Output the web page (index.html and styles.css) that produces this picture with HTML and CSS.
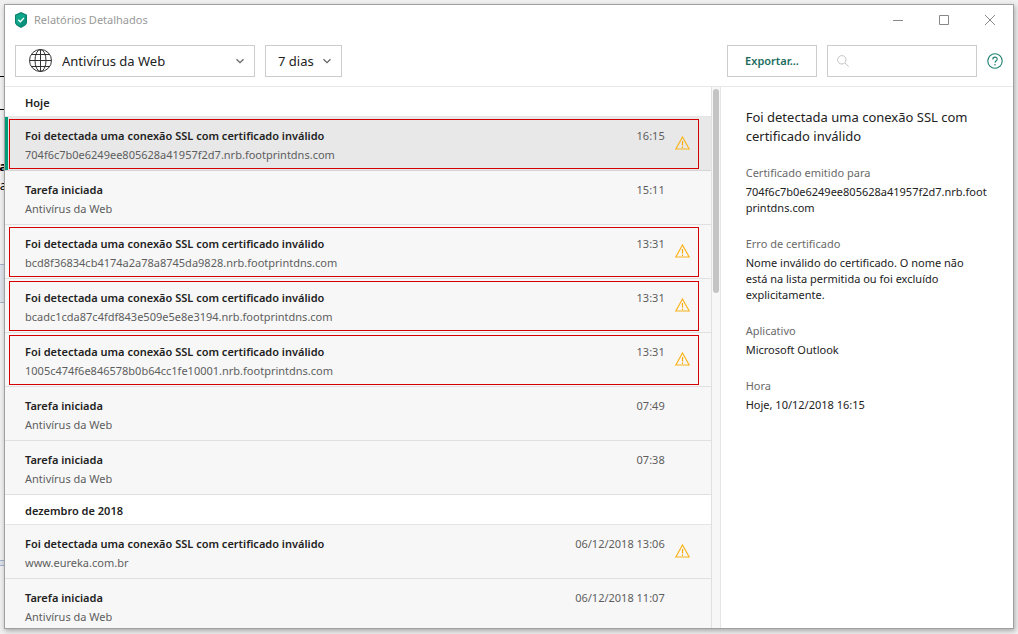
FILE: index.html
```html
<!DOCTYPE html>
<html lang="pt-BR">
<head>
<meta charset="utf-8">
<title>Relatórios Detalhados</title>
<link rel="stylesheet" href="styles.css">
</head>
<body>
<svg class="sprite" aria-hidden="true">
  <symbol id="warn" viewBox="0 0 15 14"><path d="M7.5 1 14.2 13H.8Z" fill="none" stroke="#fcb31c" stroke-width="1.2"/><path d="M7.5 5v4.6M7.5 10.6v1.3" fill="none" stroke="#fcab05" stroke-width="1.2"/></symbol>
  <symbol id="chev" viewBox="0 0 8 6"><path d="M.5 1.2 4 4.6 7.5 1.2" fill="none" stroke="#666" stroke-width="1.3"/></symbol>
</svg>
<div class="backdrop" aria-hidden="true">
  <div class="rule rule-a"></div>
  <div class="rule rule-b"></div>
  <span class="scrap scrap-bold">a</span>
  <span class="scrap scrap-plain">ra</span>
  <div class="cell cell-a"></div>
  <div class="cell cell-b"></div>
</div>
<div class="window">
  <header class="titlebar">
    <svg class="shield" viewBox="0 0 12 16"><path d="M6 0 12 2.7V10.5Q12 13 6 16Q0 13 0 10.5V2.7Z" fill="#0b7f6b"/><path d="M6 1.2 11 3.5V10.3Q11 12 6 14.7Q1 12 1 10.3V3.5Z" fill="#10a68a"/><path d="M11 3.5V10.3Q11 12 6 14.7L4 13.6Z" fill="#0a927a"/><path d="M3.2 7.8 5.3 9.8 9 6" fill="none" stroke="#fff" stroke-width="1.3"/></svg>
    <h1 class="title">Relatórios Detalhados</h1>
    <div class="winbtns">
      <button class="winbtn" aria-label="Minimizar"><svg viewBox="0 0 12 12"><path d="M1 6.5h10" stroke="#888"/></svg></button>
      <button class="winbtn" aria-label="Maximizar"><svg viewBox="0 0 12 12"><path d="M1.5 1.5h9v9h-9z" fill="none" stroke="#888"/></svg></button>
      <button class="winbtn" aria-label="Fechar"><svg viewBox="0 0 12 12"><path d="m1 1 10 10M11 1 1 11" stroke="#888"/></svg></button>
    </div>
  </header>
  <div class="toolbar">
    <div class="pick pick-component">
      <svg class="globe" viewBox="0 0 23 23"><g fill="none" stroke="#333"><circle cx="11.5" cy="11.5" r="11"/><ellipse cx="11.5" cy="11.5" rx="5.5" ry="11"/><path d="M11.5 .5v22M.5 11.5h22M2.2 5.5h18.6M2.2 17.5h18.6"/></g></svg>
      <select aria-label="Componente"><option>Antivírus da Web</option></select>
      <svg class="chev"><use href="#chev"/></svg>
    </div>
    <div class="pick pick-period">
      <select aria-label="Período"><option>7 dias</option></select>
      <svg class="chev"><use href="#chev"/></svg>
    </div>
    <button class="export">Exportar...</button>
    <label class="search">
      <svg viewBox="0 0 12 12"><g fill="none" stroke="#c4c4c4"><circle cx="4.8" cy="4.8" r="4.2"/><path d="m7.8 7.8 3.9 3.9"/></g></svg>
      <input type="search" aria-label="Pesquisar">
    </label>
    <button class="help" aria-label="Ajuda"><svg viewBox="0 0 16 16"><g fill="none" stroke="#1b7f70" stroke-width="1.1"><circle cx="8" cy="8" r="7.2"/><path d="M5.8 6.4C5.8 3.4 10.2 3.4 10.2 6.2 10.2 7.8 8 7.8 8 9.8M8 11v1.4"/></g></svg></button>
  </div>
  <main class="content">
    <section class="list">
      <h2 class="group">Hoje</h2>
      <ul class="rows">
        <li class="row selected"><button class="event flagged"><span class="text"><b>Foi detectada uma conexão SSL com certificado inválido</b><span>704f6c7b0e6249ee805628a41957f2d7.nrb.footprintdns.com</span></span><time>16:15</time><svg class="warn"><use href="#warn"/></svg></button></li>
        <li class="row"><button class="event"><span class="text"><b>Tarefa iniciada</b><span>Antivírus da Web</span></span><time>15:11</time><span class="warn"></span></button></li>
        <li class="row"><button class="event flagged"><span class="text"><b>Foi detectada uma conexão SSL com certificado inválido</b><span>bcd8f36834cb4174a2a78a8745da9828.nrb.footprintdns.com</span></span><time>13:31</time><svg class="warn"><use href="#warn"/></svg></button></li>
        <li class="row"><button class="event flagged"><span class="text"><b>Foi detectada uma conexão SSL com certificado inválido</b><span>bcadc1cda87c4fdf843e509e5e8e3194.nrb.footprintdns.com</span></span><time>13:31</time><svg class="warn"><use href="#warn"/></svg></button></li>
        <li class="row"><button class="event flagged"><span class="text"><b>Foi detectada uma conexão SSL com certificado inválido</b><span>1005c474f6e846578b0b64cc1fe10001.nrb.footprintdns.com</span></span><time>13:31</time><svg class="warn"><use href="#warn"/></svg></button></li>
        <li class="row"><button class="event"><span class="text"><b>Tarefa iniciada</b><span>Antivírus da Web</span></span><time>07:49</time><span class="warn"></span></button></li>
        <li class="row"><button class="event"><span class="text"><b>Tarefa iniciada</b><span>Antivírus da Web</span></span><time>07:38</time><span class="warn"></span></button></li>
      </ul>
      <h2 class="group">dezembro de 2018</h2>
      <ul class="rows">
        <li class="row"><button class="event"><span class="text"><b>Foi detectada uma conexão SSL com certificado inválido</b><span>www.eureka.com.br</span></span><time>06/12/2018 13:06</time><svg class="warn"><use href="#warn"/></svg></button></li>
        <li class="row"><button class="event"><span class="text"><b>Tarefa iniciada</b><span>Antivírus da Web</span></span><time>06/12/2018 11:07</time><span class="warn"></span></button></li>
      </ul>
    </section>
    <div class="scrollbar"><div class="thumb"></div></div>
    <aside class="details">
      <h2>Foi detectada uma conexão SSL com certificado inválido</h2>
      <dl>
        <div><dt>Certificado emitido para</dt><dd>704f6c7b0e6249ee805628a41957f2d7.nrb.footprintdns.com</dd></div>
        <div><dt>Erro de certificado</dt><dd>Nome inválido do certificado. O nome não<br>está na lista permitida ou foi excluído explicitamente.</dd></div>
        <div><dt>Aplicativo</dt><dd>Microsoft Outlook</dd></div>
        <div><dt>Hora</dt><dd>Hoje, 10/12/2018 16:15</dd></div>
      </dl>
    </aside>
  </main>
</div>
</body>
</html>
```
FILE: styles.css
```css
* { box-sizing: border-box; }
body {
  margin: 0;
  height: 100vh;
  padding: 4px 4px 5px;
  overflow: hidden;
  background: #f0f0f0;
  color: #222;
  font: 11px/16px "Noto Sans", "Open Sans", sans-serif;
}
h1, h2, ul, dl, dd { margin: 0; padding: 0; font-size: inherit; }
ul { list-style: none; }
button, input, select { font: inherit; color: inherit; background: none; border: 0; padding: 0; margin: 0; }
svg { display: block; }
.sprite { position: absolute; width: 0; height: 0; }

.backdrop { position: absolute; inset: 0 auto 0 0; width: 4px; overflow: hidden; color: #000; }
.rule { position: absolute; width: 4px; height: 1px; background: #000; }
.rule-a { top: 76px; }
.rule-b { top: 109px; }
.scrap { position: absolute; right: -3px; font-size: 13px; }
.scrap-bold { top: 158px; font-weight: 700; }
.scrap-plain { top: 177px; }
.cell { position: absolute; width: 4px; border: solid #a3b1c9; border-width: 1px 0; background: #dde2ea; }
.cell-a { top: 264px; height: 39px; }
.cell-b { top: 560px; height: 6px; }

.window {
  position: relative;
  display: flex;
  flex-direction: column;
  height: 100%;
  border: 1px solid #a0a0a0;
  background: #fff;
  box-shadow: 1px 2px 5px rgba(0, 0, 0, .3);
}
.titlebar { display: flex; align-items: center; height: 30px; padding: 0 17px 0 10px; color: #999; }
.shield { width: 12px; height: 16px; }
.title { flex: 1; margin-left: 7px; font-weight: 400; }
.winbtns { display: flex; gap: 34px; }
.winbtn svg { width: 12px; height: 12px; }

.toolbar {
  display: flex;
  align-items: center;
  gap: 10px;
  height: 52px;
  padding: 0 10px;
  border-bottom: 1px solid #e8e8e8;
}
.pick, .search { display: flex; align-items: center; height: 32px; border: 1px solid #ccc; }
.pick { font-size: 13px; }
.pick select { flex: 1; min-width: 0; height: 30px; appearance: none; }
.pick-component { width: 240px; padding: 0 10px 0 13px; }
.pick-period { width: 77px; padding: 0 10px 0 12px; }
.globe { width: 23px; height: 23px; margin-right: 10px; }
.chev { width: 8px; height: 6px; }
.export { width: 90px; height: 32px; margin-left: auto; border: 1px solid #ccc; color: #1d6b5e; font-weight: 600; }
.search { width: 150px; padding: 0 9px; gap: 6px; }
.search svg { flex: none; width: 12px; height: 12px; }
.search input { flex: 1; min-width: 0; height: 30px; outline: 0; }
.help svg { width: 16px; height: 16px; }

.content { flex: 1; display: flex; min-height: 0; }
.list { flex: 1; min-width: 0; overflow: hidden; border-right: 1px solid #e0e0e0; }
.group { height: 30px; padding-left: 20px; border-bottom: 1px solid #e5e5e5; line-height: 32px; font-weight: 600; }
.row { padding: 2px 12px 1px 4px; border-bottom: 1px solid #e0e0e0; background: #f7f7f7; }
.row.selected { background: #e8e8e8; border-color: #d4d4d4; box-shadow: inset 3px 0 #009b77; }
.event {
  display: flex;
  width: 100%;
  padding: 8px 8px 5px 15px;
  border: 1px solid transparent;
  text-align: left;
}
.event.flagged { border-color: #d40000; }
.text { flex: 1; display: grid; gap: 3px; }
.text b { font-weight: 600; }
.text span, time { color: #5e5e5e; }
.warn { width: 15px; height: 14px; margin: 8px 0 0 10px; }

.scrollbar { width: 9px; padding: 2px 1px; border-right: 1px solid #e5e5e5; background: #f7f7f7; }
.thumb { height: 38%; border-radius: 3px; background: #c4c4c4; }

.details { width: 29%; padding: 21px 20px 20px 25px; }
.details h2 { margin-bottom: 19px; font-size: 13px; line-height: 19px; font-weight: 400; }
.details dl { display: grid; gap: 20px; }
.details dt { margin-bottom: 3px; color: #6a6a6a; }
.details dd { overflow-wrap: anywhere; }
```
